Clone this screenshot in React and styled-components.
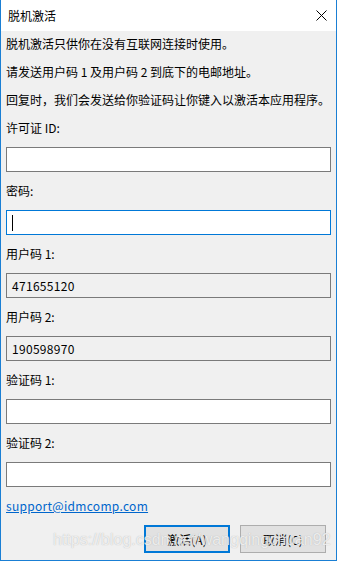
import React from "react";
import styled, { createGlobalStyle } from "styled-components";

const Global = createGlobalStyle`
  html, body { margin: 0; padding: 0; background: #ffffff; }
  body { font-family: "Noto Sans CJK SC", "Noto Sans", sans-serif; }
`;

const Window = styled.div`
  position: relative;
  width: 337px;
  height: 561px;
  box-sizing: border-box;
  border: 1px solid #1a7fd4;
  border-top: none;
  background: #f0f0f0;
  display: flex;
  flex-direction: column;
  overflow: hidden;
  font-size: 12px;
  color: #000;
`;

const TitleBar = styled.div`
  height: 31px;
  flex: none;
  background: #ffffff;
  display: flex;
  align-items: center;
  justify-content: space-between;
  padding: 0 9px 0 7px;
`;

const Title = styled.span`
  font-size: 12px;
  line-height: 20px;
`;

const CloseButton = styled.div`
  width: 12px;
  height: 12px;
  display: flex;
  align-items: center;
  justify-content: center;
`;

const Content = styled.div`
  flex: 1;
  display: flex;
  flex-direction: column;
  padding: 3px 5px 0 5px;
`;

const Para = styled.p`
  margin: 0 0 8px 0;
  height: 20px;
  line-height: 20px;
  white-space: nowrap;
`;

const Field = styled.div`
  display: flex;
  flex-direction: column;
  margin-bottom: 9px;
`;

const Label = styled.label`
  height: 20px;
  line-height: 20px;
  margin-bottom: 9px;
  white-space: nowrap;
`;

const TextBox = styled.div`
  height: 25px;
  box-sizing: border-box;
  border: 1px solid ${(p) => (p.$focused ? "#0078d7" : "#7a7a7a")};
  background: ${(p) => (p.$readOnly ? "#f0f0f0" : "#ffffff")};
  display: flex;
  align-items: center;
  padding: 0 5px;
  font-size: 12px;
  letter-spacing: 0.3px;
`;

const Caret = styled.span`
  display: inline-block;
  width: 1px;
  height: 16px;
  background: #000;
`;

const Link = styled.a`
  display: block;
  height: 20px;
  line-height: 20px;
  color: #0066cc;
  text-decoration: underline;
  font-size: 12px;
  letter-spacing: 0.3px;
  margin-bottom: 9px;
  align-self: flex-start;
`;

const ButtonRow = styled.div`
  display: flex;
  justify-content: flex-end;
  gap: 10px;
  padding-right: 5px;
`;

const Button = styled.button`
  width: 86px;
  height: 28px;
  box-sizing: border-box;
  background: #e1e1e1;
  border: ${(p) => (p.$default ? "2px solid #0078d7" : "1px solid #adadad")};
  font-family: "Noto Sans CJK SC", "Noto Sans", sans-serif;
  font-size: 12px;
  color: #000;
  padding: 0;
  margin: 0;
`;

const Watermark = styled.div`
  position: absolute;
  left: 52px;
  top: 530px;
  font-family: "Liberation Sans", Arial, sans-serif;
  font-size: 16px;
  line-height: 20px;
  color: rgba(255, 255, 255, 0.75);
  text-shadow: 0 0 1px rgba(150, 150, 150, 0.7);
  white-space: nowrap;
  pointer-events: none;
`;

const fields = [
  { label: "许可证 ID:" },
  { label: "密码:", focused: true },
  { label: "用户码 1:", value: "471655120", readOnly: true },
  { label: "用户码 2:", value: "190598970", readOnly: true },
  { label: "验证码 1:" },
  { label: "验证码 2:" },
];

export default function App() {
  return (
    <>
      <Global />
      <Window>
        <TitleBar>
          <Title>脱机激活</Title>
          <CloseButton>
            <svg width="11" height="11" viewBox="0 0 11 11">
              <path d="M0.5 0.5 L10.5 10.5 M10.5 0.5 L0.5 10.5" stroke="#000" strokeWidth="1" fill="none" />
            </svg>
          </CloseButton>
        </TitleBar>
        <Content>
          <Para>脱机激活只供你在没有互联网连接时使用。</Para>
          <Para>请发送用户码 1 及用户码 2 到底下的电邮地址。</Para>
          <Para>回复时，我们会发送给你验证码让你键入以激活本应用程序。</Para>
          {fields.map((f) => (
            <Field key={f.label}>
              <Label>{f.label}</Label>
              <TextBox $focused={f.focused} $readOnly={f.readOnly}>
                {f.focused ? <Caret /> : f.value}
              </TextBox>
            </Field>
          ))}
          <Link href="#">support@idmcomp.com</Link>
          <ButtonRow>
            <Button $default>激活(A)</Button>
            <Button>取消(C)</Button>
          </ButtonRow>
        </Content>
        <Watermark>https://blog.csdn.net/wangqingchuan92</Watermark>
      </Window>
    </>
  );
}
